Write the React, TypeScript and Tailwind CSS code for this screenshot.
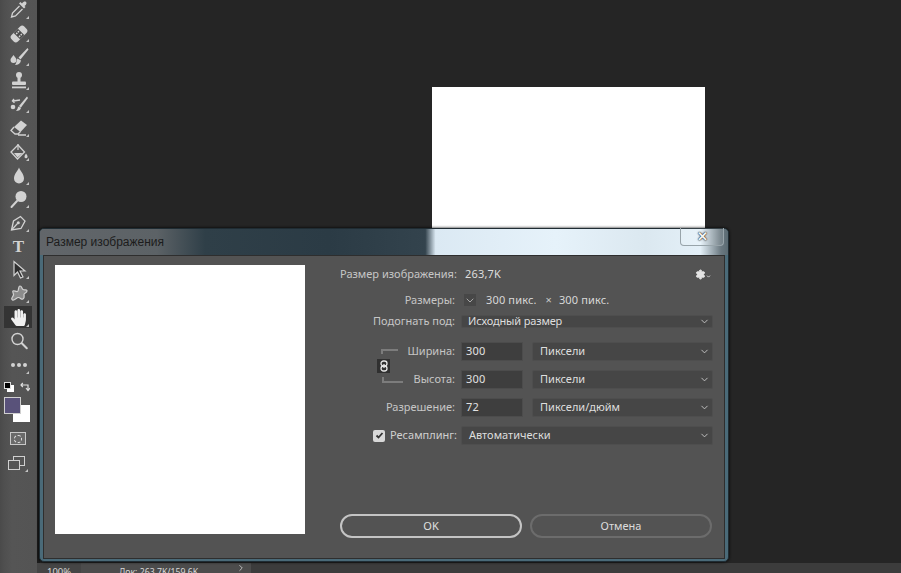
import type { ReactNode } from 'react';
import { FaHandPaper } from 'react-icons/fa';
import { ChevronDown, Settings } from 'lucide-react';

const C = '#d2d2d2';

function Tool({ children, active, corner = true }: { children: ReactNode; active?: boolean; corner?: boolean }) {
  return (
    <div className="relative flex h-[23.7px] w-full items-center justify-center">
      {active && <div className="absolute left-[4px] top-0 h-[22px] w-[28px] bg-[#343434]" />}
      <div className="relative flex h-[20px] w-[20px] items-center justify-center">{children}</div>
      {corner && <div className="absolute bottom-[3px] right-[8px] h-0 w-0 border-b-[3px] border-l-[3px] border-b-[#c4c4c4] border-l-transparent" />}
    </div>
  );
}

function Ico({ children }: { children: ReactNode }) {
  return (
    <svg width="20" height="20" viewBox="0 0 20 20" fill="none" stroke="none">
      {children}
    </svg>
  );
}

function Toolbar() {
  return (
    <div className="flex h-full w-[37px] shrink-0 flex-col bg-[linear-gradient(90deg,#4a4a4a_0,#4f4f4f_4px,#555_12px,#545454_100%)]">
      <div className="-mt-[2px]">
        <Tool>
          <Ico>
            <path fill={C} d="M13 3.500c1.500-2 3-2.500 4-1.500s.5 2.500-1.500 4l1 1-1.500 1.500-5-5L11.500 2z" />
            <path stroke={C} strokeWidth="1.300" d="M10.500 6 3.500 13l-1 4 4-1 7-7" />
          </Ico>
        </Tool>
        <Tool>
          <Ico>
            <g transform="rotate(-45 10 10)">
              <rect x="1" y="5.500" width="18" height="9" rx="3" fill={C} />
              <rect x="7" y="5.500" width="6" height="9" fill="#4c4c4c" />
              <circle cx="8.800" cy="8" r=".9" fill={C} />
              <circle cx="11.200" cy="8" r=".9" fill={C} />
              <circle cx="8.800" cy="12" r=".9" fill={C} />
              <circle cx="11.200" cy="12" r=".9" fill={C} />
            </g>
          </Ico>
        </Tool>
        <Tool>
          <Ico>
            <path fill={C} d="M4.500 8C3 10 1.500 11.500 1.500 13a3 3 0 0 0 6 0c0-1.500-1.500-3-3-5z" />
            <path fill={C} d="M18.500 1 9.500 10.500l2 2 8-10z" />
            <path fill={C} d="M8.500 11.500c-1 1-.5 4-2.500 6.500 3 0 5.500-1.500 6-4.500z" />
          </Ico>
        </Tool>
        <Tool>
          <Ico>
            <circle cx="10" cy="4" r="3" fill={C} />
            <rect x="8.500" y="5" width="3" height="6" fill={C} />
            <rect x="3" y="10.500" width="14" height="3.500" rx="1" fill={C} />
            <rect x="3" y="15.500" width="14" height="1.800" fill={C} />
          </Ico>
        </Tool>
        <Tool>
          <Ico>
            <path fill={C} d="M18 1.500 10 11l1.800 1.800L19 3z" />
            <path fill={C} d="M9.500 11.500c-1 1-.5 2.500-2.500 4.500 3 0 4.500-1 5-3z" />
            <path stroke={C} strokeWidth="1.400" d="M11 5 4 6M5 4 3.500 6l2 1.800" />
            <circle cx="4" cy="12" r="2.300" fill={C} />
          </Ico>
        </Tool>
        <Tool>
          <Ico>
            <path fill={C} d="M12 2.500 18 7l-6.500 7L5 9z" />
            <path stroke={C} strokeWidth="1.300" d="M5 9 2 12.500 6 16h3l2.500-2.500M9 17h8" />
          </Ico>
        </Tool>
        <Tool>
          <Ico>
            <path stroke={C} strokeWidth="1.300" d="M9 3 2 10l6.500 7 7-7z" />
            <path fill={C} d="M5 11h8.500L8.500 15.500z" />
            <path stroke={C} strokeWidth="1.200" d="M9 8V2" />
            <path fill={C} d="M17 11.500c-1 1.500-1.500 2.300-1.500 3.200a1.500 1.500 0 0 0 3 0c0-.9-.5-1.700-1.500-3.200z" />
          </Ico>
        </Tool>
        <Tool>
          <Ico>
            <path fill={C} d="M10 1.500c-1.500 4-5 6.500-5 11a5 5 0 0 0 10 0c0-4.500-3.500-7-5-11z" />
          </Ico>
        </Tool>
        <Tool>
          <Ico>
            <circle cx="12" cy="7.500" r="5.500" fill={C} />
            <path stroke={C} strokeWidth="2" strokeLinecap="round" d="M8 12 2.500 18" />
          </Ico>
        </Tool>
        <Tool>
          <Ico>
            <path stroke={C} strokeWidth="1.300" d="M2.500 17 4.500 8l7-4.500 4.500 4.500-4 7.500z" />
            <path stroke={C} strokeWidth="1.200" d="M2.500 17 8.500 10.500" />
            <circle cx="9.300" cy="9.800" r="1.500" fill={C} />
          </Ico>
        </Tool>
        <Tool corner={false}>
          <span className="font-['Liberation_Serif',serif] text-[17px] font-bold leading-none text-[#d2d2d2]">T</span>
        </Tool>
        <Tool>
          <Ico>
            <path fill="#2f2f2f" stroke={C} strokeWidth="1.200" d="M5 1.500v14l3.500-3.500 3 6 2.500-1-3-6h5z" />
          </Ico>
        </Tool>
        <Tool>
          <Ico>
            <path fill="#8c8c8c" stroke={C} strokeWidth="1.200" d="M11 2c2 0 1.500 2.500 3 3.500s4-.5 4 1.500-3 2-3 3.500 1 3.500-1 4.500-2.500-1.500-4.500-1.500-4 3.500-6 2.500.5-3.500 1-5S3 8 4 7s3 1 4.500.5S9 2 11 2z" />
          </Ico>
        </Tool>
        <Tool active>
          <FaHandPaper size={17} color="#f0f0f0" />
        </Tool>
        <Tool corner={false}>
          <Ico>
            <circle cx="8.500" cy="8" r="5.500" stroke={C} strokeWidth="1.400" />
            <path stroke={C} strokeWidth="2" strokeLinecap="round" d="m12.800 12.300 5 5" />
          </Ico>
        </Tool>
        <Tool>
          <div className="flex gap-[2px]">
            <div className="h-[4px] w-[4px] rounded-full bg-[#d2d2d2]" />
            <div className="h-[4px] w-[4px] rounded-full bg-[#d2d2d2]" />
            <div className="h-[4px] w-[4px] rounded-full bg-[#d2d2d2]" />
          </div>
        </Tool>
      </div>

      <div className="mt-[5px] flex h-[12px] items-start pl-[4px]">
        <div className="relative h-[10px] w-[10px]">
          <div className="absolute bottom-0 right-0 h-[7px] w-[7px] bg-white" />
          <div className="absolute left-0 top-0 h-[7px] w-[7px] border border-[#ddd] bg-black" />
        </div>
        <svg className="ml-[6px]" width="10" height="10" viewBox="0 0 10 10" fill="none" stroke="#e0e0e0" strokeWidth="1.200">
          <path d="M1 3h7v5M2.800 1 1 3l1.800 2M6 6l2 2.500L10 6" />
        </svg>
      </div>

      <div className="relative mt-[3px] h-[26px] w-full">
        <div className="absolute left-[13px] top-[8px] h-[17px] w-[17px] bg-white" />
        <div className="absolute left-[4px] top-0 h-[17px] w-[17px] border border-[#cfcfcf] bg-[#59527a]" />
      </div>

      <div className="mt-[9px] flex justify-center pr-[1px]">
        <div className="flex h-[13px] w-[16px] items-center justify-center border border-[#c8c8c8] bg-[#6a6a6a]">
          <div className="h-[8px] w-[8px] rounded-full border border-dashed border-[#e0e0e0]" />
        </div>
      </div>

      <div className="mt-[11px] flex justify-center pr-[1px]">
        <div className="relative h-[14px] w-[17px]">
          <div className="absolute right-0 top-0 h-[10px] w-[12px] border border-[#d0d0d0]" />
          <div className="absolute bottom-0 left-0 h-[10px] w-[12px] border border-[#d0d0d0] bg-[#555]" />
        </div>
        <div className="mt-[13px] h-0 w-0 border-b-[3px] border-l-[3px] border-b-[#c4c4c4] border-l-transparent" />
      </div>
    </div>
  );
}

function Label({ children }: { children: ReactNode }) {
  return <div className="w-[115px] shrink-0 whitespace-nowrap text-right text-[#c6c6c6]">{children}</div>;
}

function Select({ text, className }: { text: string; className: string }) {
  return (
    <div className={`flex items-center justify-between rounded-[2px] border border-[#4e4e4e] bg-[#464646] pr-[2px] text-[#dedede] ${className}`}>
      <span className="whitespace-nowrap">{text}</span>
      <ChevronDown size={11} color="#c8c8c8" strokeWidth={2} />
    </div>
  );
}

function NumberField({ value }: { value: string }) {
  return (
    <div className="ml-[6px] flex h-[19px] w-[62px] shrink-0 items-center border border-[#4c4c4c] bg-[#3e3e3e] pl-[4px] tracking-[0.25px] text-[#e2e2e2]">
      {value}
    </div>
  );
}

function Dialog() {
  return (
    <div className="absolute left-[39px] top-[228px] h-[334px] w-[690px] rounded-[5px] border border-[#1f2c33] bg-[#4a6a78] shadow-[0_0_3px_#000]">
      <div className="flex h-[26px] items-center rounded-t-[4px] bg-[linear-gradient(90deg,#62666a_0,#5c6266_17%,#2f3f48_24%,#2b3b45_42%,#33434d_56%,#dbe9f3_57.500%,#e6f2fa_75%,#dbe8f0_88%,#e4f0f8_96%,#6a7880_99%,#5a6a72_100%)] pl-[6px] font-['Liberation_Sans',sans-serif] text-[12px] text-[#1c1c1c]">
        Размер изображения
      </div>
      <div className="absolute right-[4px] top-[-1px] flex h-[18px] w-[44px] items-center justify-center rounded-b-[4px] border border-[#98a4aa] border-t-0 bg-white/10">
        <span className="text-[13px] font-bold leading-none text-[#f4f4f4] [text-shadow:0_0_1px_#000,0_0_2px_#222]">✕</span>
      </div>

      <div className="mx-[3px] flex h-[304px] items-start border border-[#2e2e2e] bg-[#535353] pl-[11px] pt-[9px] font-['Noto_Sans',sans-serif] text-[11px]">
        <div className="h-[269px] w-[250px] shrink-0 bg-white" />
        <div className="ml-[35px] flex h-[273px] w-[373px] flex-col">
          <div className="flex h-[18px] items-center">
            <Label>Размер изображения:</Label>
            <span className="ml-[10px] tracking-[0.2px] text-[#dedede]">263,7K</span>
            <div className="ml-auto mr-[2px] flex items-center">
              <Settings size={11} color="#e4e4e4" fill="#e4e4e4" strokeWidth={2} />
              <ChevronDown size={5} color="#e4e4e4" strokeWidth={4} className="mt-[4px]" />
            </div>
          </div>

          <div className="mt-[8px] flex h-[18px] items-center">
            <Label>Размеры:</Label>
            <div className="ml-[9px] flex h-[12px] w-[12px] items-center justify-center bg-[#474747]">
              <ChevronDown size={13} color="#c8c8c8" strokeWidth={1.500} />
            </div>
            <span className="ml-[10px] whitespace-nowrap tracking-[0.15px] text-[#d8d8d8]">300 пикс.</span>
            <span className="ml-[9px] text-[#c8c8c8]">×</span>
            <span className="ml-[7px] whitespace-nowrap tracking-[0.15px] text-[#d8d8d8]">300 пикс.</span>
          </div>

          <div className="mt-[6px] flex h-[13px] items-center">
            <Label>Подогнать под:</Label>
            <Select text="Исходный размер" className="ml-[6px] h-[13px] w-[252px] pl-[6px] tracking-[-0.15px]" />
          </div>

          <div className="relative mt-[14px]">
            <div className="flex h-[19px] items-center">
              <Label>Ширина:</Label>
              <NumberField value="300" />
              <Select text="Пиксели" className="ml-[9px] h-[19px] w-[181px] pl-[7px]" />
            </div>
            <div className="mt-[9px] flex h-[19px] items-center">
              <Label>Высота:</Label>
              <NumberField value="300" />
              <Select text="Пиксели" className="ml-[9px] h-[19px] w-[181px] pl-[7px]" />
            </div>
            <div className="absolute left-[41px] top-[7px] h-[5px] w-[17px] border-l-2 border-t-2 border-[#7c7c7c]" />
            <div className="absolute left-[37px] top-[17px] flex h-[14px] w-[13px] items-center justify-center bg-[#303030]">
              <svg width="8" height="12" viewBox="0 0 8 12" fill="none" stroke="#e6e6e6" strokeWidth="1.300">
                <rect x="1" y="1" width="6" height="5" rx="2.500" />
                <rect x="1" y="6" width="6" height="5" rx="2.500" />
                <path d="M4 4v4" />
              </svg>
            </div>
            <div className="absolute left-[42px] top-[35px] h-[6px] w-[21px] border-b-2 border-l-2 border-[#7c7c7c]" />
          </div>

          <div className="mt-[9px] flex h-[19px] items-center">
            <Label>Разрешение:</Label>
            <NumberField value="72" />
            <Select text="Пиксели/дюйм" className="ml-[9px] h-[19px] w-[181px] pl-[7px]" />
          </div>

          <div className="mt-[9px] flex h-[19px] items-center">
            <div className="ml-[33px] flex h-[12px] w-[12px] items-center justify-center rounded-[2px] bg-[#d8d8d8]">
              <svg width="9" height="9" viewBox="0 0 9 9" fill="none" stroke="#333" strokeWidth="1.800">
                <path d="m1.500 4.500 2 2 4-4.500" />
              </svg>
            </div>
            <div className="ml-[5px] w-[66px] shrink-0 whitespace-nowrap text-[#d0d0d0]">Ресамплинг:</div>
            <Select text="Автоматически" className="ml-[5px] h-[19px] w-[252px] pl-[7px]" />
          </div>

          <div className="mt-auto flex gap-[8px]">
            <div className="flex h-[24px] w-[182px] items-center justify-center rounded-full border-2 border-[#c4c4c4] text-[#e0e0e0]">OK</div>
            <div className="flex h-[24px] w-[182px] items-center justify-center rounded-full border-2 border-[#6c6c6c] text-[#dcdcdc]">Отмена</div>
          </div>
        </div>
      </div>
    </div>
  );
}

export default function App() {
  return (
    <div className="relative flex h-[573px] w-[901px] overflow-hidden bg-[#252525]">
      <Toolbar />
      <div className="flex min-w-0 flex-1 flex-col">
        <div className="flex-1 border-l-[3px] border-[#1c1c1c] bg-[#252525]" />
        <div className="flex h-[10px] overflow-hidden bg-[#3c3c3c] font-['Noto_Sans',sans-serif] leading-[18px] text-[#d8d8d8]">
          <div className="w-[44px] shrink-0 bg-[#454545] pl-[10px] text-[9.500px]">100%</div>
          <div className="relative w-[170px] shrink-0 bg-[#4c4c4c] pl-[38px] text-[8.700px]">
            Док: 263,7K/159,6K
            <ChevronDown size={10} color="#d0d0d0" className="absolute left-[155px] top-0 -rotate-90" />
          </div>
        </div>
      </div>
      <div className="absolute left-[432px] top-[87px] h-[145px] w-[273px] bg-white" />
      <Dialog />
    </div>
  );
}
